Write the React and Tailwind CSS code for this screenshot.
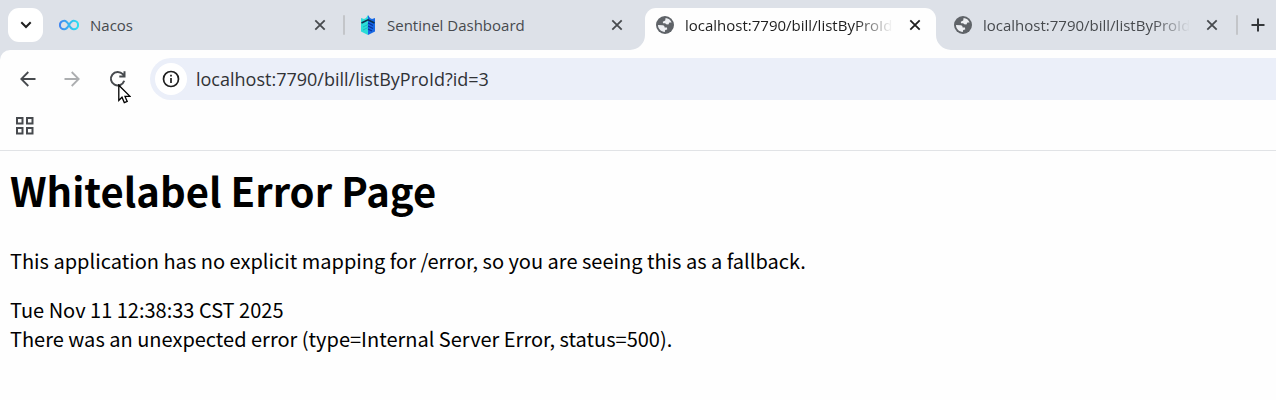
import React from "react";

const CloseIcon = () => (
  <svg viewBox="0 0 12 12" className="size-3" fill="none" stroke="currentColor" strokeWidth="1.8">
    <path d="M1.3 1.3 10.7 10.7M10.7 1.3 1.3 10.7" />
  </svg>
);

const Globe = () => (
  <svg viewBox="0 0 18 18" className="size-[18px] shrink-0">
    <circle cx="9" cy="9" r="9" fill="#5f6368" />
    <path
      d="M9.6 2.1C12.4 2.3 14.6 4 15.6 6.4L13.4 6.6 12.4 8.4 10.2 8.2 9.2 7.2 7 7.3 6.8 5.8 9.2 4.6ZM2 9 6.6 9.2C8.2 9.4 8.6 10.4 8.6 11.4L11 11.6 11.2 13.4 9.2 14 8.8 16C5 15.8 2 12.8 2 9Z"
      fill="#eceef2"
    />
  </svg>
);

const NacosIcon = () => (
  <svg viewBox="0 0 20 12" className="h-3 w-5 shrink-0" fill="none">
    <defs>
      <linearGradient id="nacos" x1="0" x2="20" y1="0" y2="0" gradientUnits="userSpaceOnUse">
        <stop stopColor="#4285f0" />
        <stop offset="1" stopColor="#2be4f0" />
      </linearGradient>
    </defs>
    <path
      d="M10 6C8.5 3.3 7.2 1.7 5.2 1.7a4.3 4.3 0 0 0 0 8.6C7.2 10.3 8.5 8.7 10 6s2.8-4.3 4.8-4.3a4.3 4.3 0 0 1 0 8.6C12.8 10.3 11.5 8.7 10 6Z"
      stroke="url(#nacos)"
      strokeWidth="2.1"
    />
  </svg>
);

const SentinelIcon = () => (
  <svg viewBox="0 0 16 20" className="h-5 w-4 shrink-0">
    <path d="M1 3 4 4 6 3 8 0V20L1 16.5Z" fill="#2bdcd8" />
    <path d="M8 0 10 3 12 4 15 3V16.5L8 20Z" fill="#1768e4" />
    <path d="M1.5 8 8 4.8 14.5 8" fill="none" stroke="#0a3050" strokeWidth="1.6" />
    <path d="M8 8 13 10.5M8 11 13 13.5M8 14 12 16" stroke="#08309a" strokeWidth="1.3" />
    <path d="M3 12 8 9.5M3 15 8 12.5" stroke="#18b4c0" strokeWidth="1" />
  </svg>
);

function Tab({ icon, title, fade, active, className }) {
  return (
    <div
      role="tab"
      aria-selected={!!active}
      className={`flex min-w-0 items-center ${active ? "text-[#1f1f1f]" : "text-[#474a4e]"} ${className}`}
    >
      {icon}
      <span
        className={`ml-[11px] min-w-0 flex-1 overflow-hidden text-[15px] leading-6 whitespace-nowrap ${
          fade ? "[mask-image:linear-gradient(to_right,black_82%,transparent)]" : ""
        }`}
      >
        {title}
      </span>
      <button aria-label={`Close ${title}`} className="ml-4 flex size-3 shrink-0 items-center justify-center">
        <CloseIcon />
      </button>
    </div>
  );
}

const Flare = ({ right }) => (
  <svg viewBox="0 0 15 15" className={`size-[15px] shrink-0 self-end ${right ? "-scale-x-100" : ""}`} fill="#fefefe">
    <path d="M15 0V15H0A15 15 0 0 0 15 0Z" />
  </svg>
);

const Divider = () => <span className="h-5 w-[2px] shrink-0 rounded-full bg-[#c3c5c9]" />;

export default function App() {
  return (
    <div className="min-h-screen bg-[#fefefe]">
      <header className="bg-[#dde1e8] font-['Open_Sans','Noto_Sans',sans-serif]">
        <div role="tablist" className="flex h-[50px] items-center overflow-hidden pl-2">
          <button
            aria-label="Search tabs"
            className="flex h-[34px] w-[35px] shrink-0 items-center justify-center rounded-[11px] bg-white text-[#1f1f1f]"
          >
            <svg viewBox="0 0 12 8" className="h-2 w-3" fill="none" stroke="currentColor" strokeWidth="2">
              <path d="M1.3 1.3 6 6 10.7 1.3" />
            </svg>
          </button>
          <Tab icon={<NacosIcon />} title="Nacos" className="w-[300px] pr-[17px] pl-[16px]" />
          <Divider />
          <Tab icon={<SentinelIcon />} title="Sentinel Dashboard" className="w-[285px] pr-[7px] pl-[15px]" />
          <Flare />
          <Tab
            active
            fade
            icon={<Globe />}
            title="localhost:7790/bill/listByProId?id=3"
            className="mt-2 h-[42px] w-[291px] rounded-t-[11px] bg-[#fefefe] pr-[15px] pb-2 pl-[11px]"
          />
          <Flare right />
          <Tab fade icon={<Globe />} title="localhost:7790/bill/listByProId?id=3" className="w-[285px] pr-[18px] pl-[3px]" />
          <Divider />
          <button aria-label="New tab" className="ml-[13px] size-[14px] shrink-0 text-[#34373a]">
            <svg viewBox="0 0 14 14" fill="none" stroke="currentColor" strokeWidth="2">
              <path d="M7 .5v13M.5 7h13" />
            </svg>
          </button>
        </div>

        <div className="rounded-tl-[10px] bg-[#fefefe]">
          <nav className="flex h-[58px] items-center pl-5 text-[#474a4e]">
            <button aria-label="Back" className="size-4">
              <svg viewBox="0 0 16 16" fill="none" stroke="currentColor" strokeWidth="1.8">
                <path d="M15.5 8H1.8M8.3 1 1.3 8l7 7" />
              </svg>
            </button>
            <button aria-label="Forward" disabled className="ml-7 size-4 text-[#acaeb0]">
              <svg viewBox="0 0 16 16" fill="none" stroke="currentColor" strokeWidth="1.8">
                <path d="M.5 8h13.7M7.7 1l7 7-7 7" />
              </svg>
            </button>
            <div className="relative ml-[29px] size-[18px] shrink-0">
              <button aria-label="Reload" className="block size-[18px]">
                <svg viewBox="0 0 18 18" fill="none" stroke="currentColor" strokeWidth="2">
                  <path d="M15.2 10.8A6.8 6.8 0 1 1 13.8 4.2L15.4 6M15.5 1.2v5.2h-5.2" />
                </svg>
              </button>
              <svg viewBox="0 0 13 20" className="pointer-events-none absolute top-[14px] left-[9px] h-5 w-[13px]">
                <path
                  d="M.8 1.2V16.4L4 13.2 6.3 18.6 9.2 17.4 7 12.4H12Z"
                  fill="#fff"
                  stroke="#000"
                  strokeWidth="1.3"
                />
              </svg>
            </div>
            <div className="ml-[23px] flex h-[42px] min-w-0 flex-1 items-center rounded-l-full bg-[#ebeff9] pl-[5px]">
              <button
                aria-label="Site information"
                className="flex size-8 shrink-0 items-center justify-center rounded-full bg-white text-[#1f1f1f]"
              >
                <svg viewBox="0 0 18 18" className="size-[18px]" fill="none" stroke="currentColor" strokeWidth="1.7">
                  <circle cx="9" cy="9" r="7.5" />
                  <path d="M9 8v5M9 4.8v1.8" />
                </svg>
              </button>
              <input
                aria-label="Address"
                defaultValue="localhost:7790/bill/listByProId?id=3"
                className="ml-[9px] h-8 min-w-0 flex-1 bg-transparent text-lg text-[#303236] outline-none"
              />
            </div>
          </nav>
          <div className="flex h-[43px] items-center border-b border-[#e1e3e6] pb-[7px] pl-4 text-[#474a4e]">
            <button aria-label="Apps" className="size-[18px]">
              <svg viewBox="0 0 18 18" fill="none" stroke="currentColor" strokeWidth="2">
                <path d="M1 1h5.5v5.5H1zM11 1h5.5v5.5H11zM1 11h5.5v5.5H1zM11 11h5.5v5.5H11z" />
              </svg>
            </button>
          </div>
        </div>
      </header>

      <main className="px-[10px] pt-[10px] font-['Noto_Sans_CJK_SC',sans-serif] text-[20px] leading-[29px] text-black">
        <h1 className="text-[40px] leading-[58px] font-bold">Whitelabel Error Page</h1>
        <p className="mt-[27px]">This application has no explicit mapping for /error, so you are seeing this as a fallback.</p>
        <div className="mt-5">Tue Nov 11 12:38:33 CST 2025</div>
        <div>There was an unexpected error (type=Internal Server Error, status=500).</div>
      </main>
    </div>
  );
}
